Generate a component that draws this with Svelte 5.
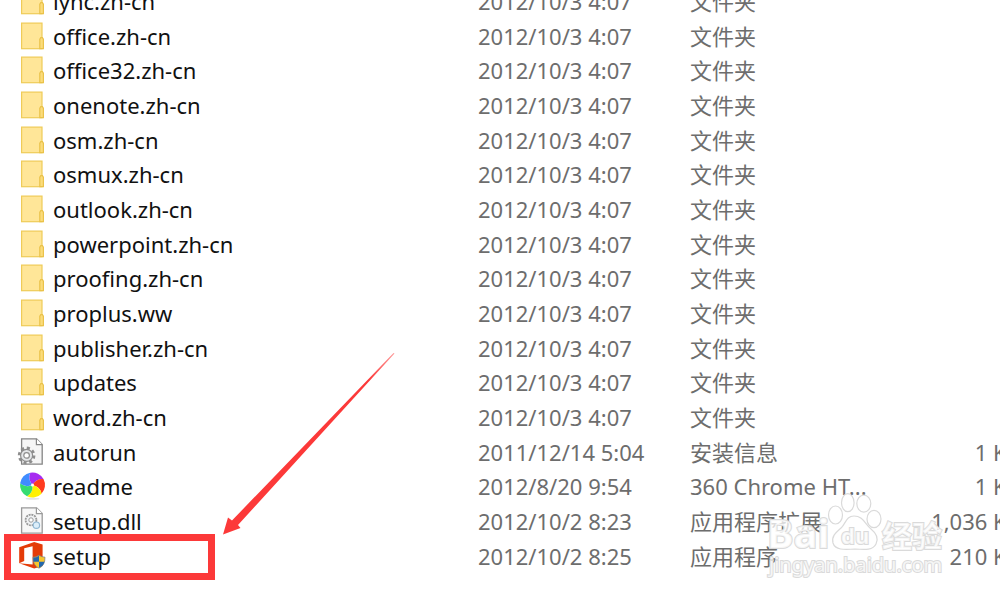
<script lang="ts">

    const files = [
        { icon: "folder", name: "lync.zh-cn", date: "2012/10/3 4:07", type: "文件夹", size: "" },
        { icon: "folder", name: "office.zh-cn", date: "2012/10/3 4:07", type: "文件夹", size: "" },
        { icon: "folder", name: "office32.zh-cn", date: "2012/10/3 4:07", type: "文件夹", size: "" },
        { icon: "folder", name: "onenote.zh-cn", date: "2012/10/3 4:07", type: "文件夹", size: "" },
        { icon: "folder", name: "osm.zh-cn", date: "2012/10/3 4:07", type: "文件夹", size: "" },
        { icon: "folder", name: "osmux.zh-cn", date: "2012/10/3 4:07", type: "文件夹", size: "" },
        { icon: "folder", name: "outlook.zh-cn", date: "2012/10/3 4:07", type: "文件夹", size: "" },
        { icon: "folder", name: "powerpoint.zh-cn", date: "2012/10/3 4:07", type: "文件夹", size: "" },
        { icon: "folder", name: "proofing.zh-cn", date: "2012/10/3 4:07", type: "文件夹", size: "" },
        { icon: "folder", name: "proplus.ww", date: "2012/10/3 4:07", type: "文件夹", size: "" },
        { icon: "folder", name: "publisher.zh-cn", date: "2012/10/3 4:07", type: "文件夹", size: "" },
        { icon: "folder", name: "updates", date: "2012/10/3 4:07", type: "文件夹", size: "" },
        { icon: "folder", name: "word.zh-cn", date: "2012/10/3 4:07", type: "文件夹", size: "" },
        { icon: "inf", name: "autorun", date: "2011/12/14 5:04", type: "安装信息", size: "1 KB" },
        { icon: "chrome", name: "readme", date: "2012/8/20 9:54", type: "360 Chrome HT...", size: "1 KB" },
        { icon: "dll", name: "setup.dll", date: "2012/10/2 8:23", type: "应用程序扩展", size: "1,036 KB" },
        { icon: "office", name: "setup", date: "2012/10/2 8:25", type: "应用程序", size: "210 KB", marked: true },
    ];

    const petals = ["#a72bf0", "#ff3b1f", "#fff000", "#35dc70", "#3f8cff"];

</script>

<main>
    <table>
        <colgroup>
            <col class="name" />
            <col class="date" />
            <col class="type" />
            <col />
        </colgroup>
        <tbody>
            {#each files as file}
            <tr>
                <td>
                    <div class="file">
                        <svg class="icon" viewBox="0 0 28 28" aria-hidden="true">
                            {#if file.icon == "folder"}
                            <rect x="4.6" y="1.1" width="20.4" height="25.6" fill="#ffe698" stroke="#efcb58" stroke-width="1.2" />
                            <path d="M22.8 26.6V17.2l1-1.600h1.600l1 1.600v9.400z" fill="#fbdc7c" stroke="#eac24a" stroke-width="1.2" />
                            {:else if file.icon == "inf"}
                            <path d="M4.6 0.8h15l5.6 5.6v19.8H4.6z" fill="#f5f5f5" stroke="#858585" stroke-width="1.3" />
                            <path d="M19.4 0.8v5.8h5.8" fill="#fff" stroke="#858585" stroke-width="1.2" />
                            <circle cx="9.6" cy="17.4" r="7.3" fill="none" stroke="#8d8d8d" stroke-width="3" stroke-dasharray="3 2.73" />
                            <circle cx="9.6" cy="17.4" r="6" fill="#e4e6e8" stroke="#8d8d8d" stroke-width="1.2" />
                            <circle cx="9.6" cy="17.4" r="2.8" fill="#fff" stroke="#8d8d8d" stroke-width="1.2" />
                            {:else if file.icon == "chrome"}
                            <ellipse cx="15.5" cy="26.8" rx="7" ry="1" fill="#e4e4e4" />
                            {#each petals as color, i}
                            <path d="M15.5 13Q10.4 6.9 13.3.7A12.5 12.5 0 0 1 26.500 7.100Q19.700 6.200 15.500 13z" fill={color} transform="rotate({i * 72} 15.5 13)" />
                            {/each}
                            <circle cx="15.5" cy="13" r="1.5" fill="#fff" />
                            {:else if file.icon == "dll"}
                            <path d="M4.6 0.8h15l5.6 5.6v19.8H4.6z" fill="#f7f7f7" stroke="#999" stroke-width="1.3" />
                            <path d="M19.4 0.8v5.8h5.8" fill="#fff" stroke="#999" stroke-width="1.2" />
                            <circle cx="14" cy="13" r="5.4" fill="#f0f2f4" stroke="#999" stroke-width="1.8" stroke-dasharray="2 .8" />
                            <circle cx="14" cy="13" r="2.2" fill="#fff" stroke="#999" />
                            <circle cx="19.4" cy="18.2" r="3.2" fill="#dceefa" stroke="#91b8d3" stroke-width="1.2" />
                            {:else}
                            <path d="M2.200 5.200L17.200 0L25.600 2.400V24L17.200 26.600L2.200 21.200L15.600 22.600V4.200L7.200 6.200V19L2.200 21.200z" fill="#e43b08" />
                            <path d="M22 13.200q3 2 6 2q.2 8.300-6 11q-6.200-2.700-6-11q3 0 6-2z" fill="#f7c52c" stroke="#777d84" stroke-width=".7" />
                            <path d="M22 13.700v6h-5.500q-.4-2-.2-4.100q3 0 5.700-1.900zM22 19.700h5.500q-1.100 4.300-5.500 6z" fill="#2467ad" />
                            {/if}
                        </svg>
                        <span>{file.name}</span>
                        {#if file.marked}
                        <div class="mark"></div>
                        {/if}
                    </div>
                </td>
                <td>{file.date}</td>
                <td>{file.type}</td>
                <td class="size">{file.size}</td>
            </tr>
            {/each}
        </tbody>
    </table>

    <svg class="arrow" viewBox="0 0 172 182" aria-hidden="true">
        <defs>
            <linearGradient id="fade" x1="1" y1="0" x2="0" y2="1">
                <stop offset="0" stop-color="#fc3939" stop-opacity="0.5" />
                <stop offset="0.15" stop-color="#fc3939" />
            </linearGradient>
        </defs>
        <path d="M0 181.500L5 164.500L9 167.500L170.500 0L171.500 .5L15 172L17.500 175z" fill="url(#fade)" />
    </svg>

    <svg class="watermark" viewBox="0 0 190 90">
        <g fill="#fff" fill-opacity="0.75" stroke="#dadada" stroke-width="1.2">
            <ellipse cx="71.500" cy="25" rx="7" ry="9" />
            <ellipse cx="83.800" cy="12.700" rx="6.300" ry="9" />
            <ellipse cx="99.800" cy="13.600" rx="7" ry="8.500" />
            <ellipse cx="110" cy="29" rx="7" ry="8.600" />
            <path d="M90 26C99 26 101 34 107 39C112 43 115 48 112 54C109 60 102 60 91 59C80 60 71 60 69 53C67 45 74 41 78 37C82 32 83 26 90 26z" />
            <g paint-order="stroke" stroke-width="2">
                <text class="bold" x="3" y="58" font-size="40">Bai</text>
                <text class="bold" x="77" y="54" font-size="22">du</text>
                <text class="bold" x="118" y="57" font-size="30">经验</text>
                <text x="5" y="82" font-size="20">jingyan.baidu.com</text>
            </g>
        </g>
    </svg>
</main>

<style>

    :global(body) {
        background: #fff;
        overflow: hidden;
    }

    main {
        position: relative;
        overflow: hidden;
        padding-bottom: 27px;

        font-family: "Noto Sans", "Noto Sans CJK SC", sans-serif;
        font-size: 22px;
        line-height: 30px;

        color: #6d6d6d;
    }

    table {
        width: calc(100% + 21px);
        margin-top: -17px;

        table-layout: fixed;
        border-collapse: collapse;
    }

    col.name {
        width: 478px;
    }

    col.date {
        width: 212px;
    }

    col.type {
        width: 200px;
    }

    tr {
        height: 35px;
    }

    tr:nth-child(3n) {
        height: 34px;
    }

    td {
        padding: 0;

        white-space: nowrap;
    }

    td.size {
        text-align: right;
    }

    .file {
        position: relative;

        display: flex;
        align-items: center;
        gap: 8px;

        padding-left: 17px;

        color: #111;
    }

    .icon {
        width: 28px;
        height: 28px;

        overflow: visible;
    }

    .mark {
        position: absolute;
        top: -7px;
        left: 4px;

        width: 211px;
        height: 46px;

        box-sizing: border-box;
        border: solid 7px #fc3939;
    }

    .arrow {
        position: absolute;
        top: 353px;
        left: 223px;

        width: 172px;
        height: 182px;
    }

    .watermark {
        position: absolute;
        top: 490px;
        left: 764px;

        width: 190px;
        height: 90px;
    }

    .bold {
        font-weight: 700;
    }

</style>
